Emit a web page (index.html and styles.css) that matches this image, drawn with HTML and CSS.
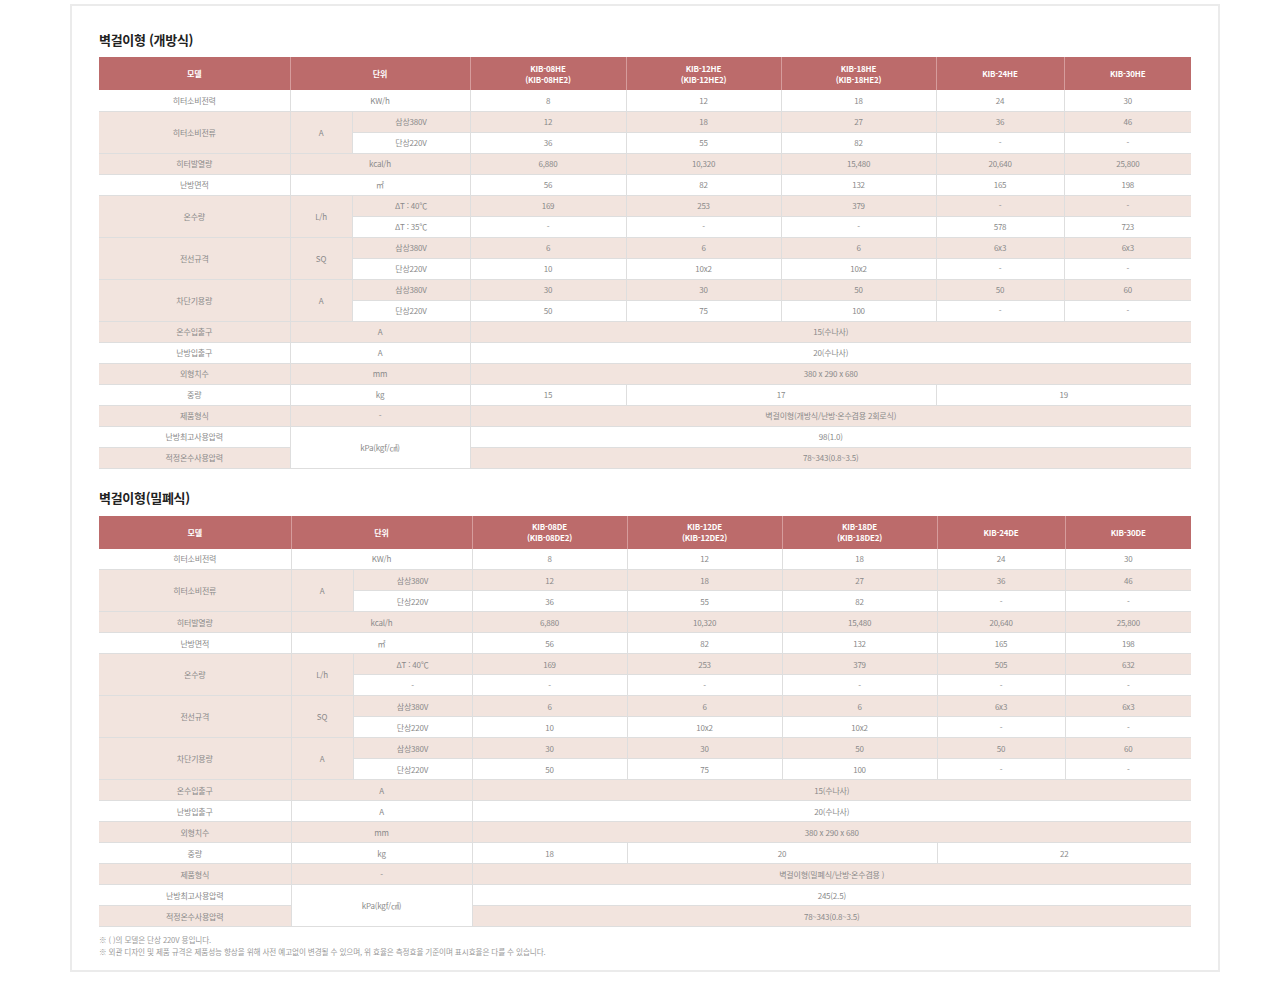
FILE: index.html
```html
<!DOCTYPE html>
<html lang="ko">
<head>
<meta charset="utf-8">
<title>벽걸이형 사양</title>
<link rel="stylesheet" href="styles.css">
</head>
<body>
<div class="box">
  <h2 class="title">벽걸이형 (개방식)</h2>
  <table class="spec">
    <colgroup>
      <col style="width:191px"><col style="width:62px"><col style="width:118px">
      <col style="width:156px"><col style="width:155px"><col style="width:155px">
      <col style="width:128px"><col style="width:127px">
    </colgroup>
    <thead>
      <tr><th>모델</th><th colspan="2">단위</th><th>KIB-08HE<br>(KIB-08HE2)</th><th>KIB-12HE<br>(KIB-12HE2)</th><th>KIB-18HE<br>(KIB-18HE2)</th><th>KIB-24HE</th><th>KIB-30HE</th></tr>
    </thead>
    <tbody>
      <tr><td>히터소비전력</td><td colspan="2">KW/h</td><td>8</td><td>12</td><td>18</td><td>24</td><td>30</td></tr>
      <tr class="p"><td rowspan="2">히터소비전류</td><td rowspan="2">A</td><td>삼상380V</td><td>12</td><td>18</td><td>27</td><td>36</td><td>46</td></tr>
      <tr><td>단상220V</td><td>36</td><td>55</td><td>82</td><td>-</td><td>-</td></tr>
      <tr class="p"><td>히터발열량</td><td colspan="2">kcal/h</td><td>6,880</td><td>10,320</td><td>15,480</td><td>20,640</td><td>25,800</td></tr>
      <tr><td>난방면적</td><td colspan="2">㎡</td><td>56</td><td>82</td><td>132</td><td>165</td><td>198</td></tr>
      <tr class="p"><td rowspan="2">온수량</td><td rowspan="2">L/h</td><td>ΔT : 40℃</td><td>169</td><td>253</td><td>379</td><td>-</td><td>-</td></tr>
      <tr><td>ΔT : 35℃</td><td>-</td><td>-</td><td>-</td><td>578</td><td>723</td></tr>
      <tr class="p"><td rowspan="2">전선규격</td><td rowspan="2">SQ</td><td>삼상380V</td><td>6</td><td>6</td><td>6</td><td>6x3</td><td>6x3</td></tr>
      <tr><td>단상220V</td><td>10</td><td>10x2</td><td>10x2</td><td>-</td><td>-</td></tr>
      <tr class="p"><td rowspan="2">차단기용량</td><td rowspan="2">A</td><td>삼상380V</td><td>30</td><td>30</td><td>50</td><td>50</td><td>60</td></tr>
      <tr><td>단상220V</td><td>50</td><td>75</td><td>100</td><td>-</td><td>-</td></tr>
      <tr class="p"><td>온수입출구</td><td colspan="2">A</td><td colspan="5">15(수나사)</td></tr>
      <tr><td>난방입출구</td><td colspan="2">A</td><td colspan="5">20(수나사)</td></tr>
      <tr class="p"><td>외형치수</td><td colspan="2">mm</td><td colspan="5">380 x 290 x 680</td></tr>
      <tr><td>중량</td><td colspan="2">kg</td><td>15</td><td colspan="2">17</td><td colspan="2">19</td></tr>
      <tr class="p"><td>제품형식</td><td colspan="2">-</td><td colspan="5">벽걸이형(개방식/난방·온수겸용 2회로식)</td></tr>
      <tr><td>난방최고사용압력</td><td colspan="2" rowspan="2">kPa(kgf/㎠)</td><td colspan="5">98(1.0)</td></tr>
      <tr class="p"><td>적정온수사용압력</td><td colspan="5">78~343(0.8~3.5)</td></tr>
    </tbody>
  </table>

  <h2 class="title title2">벽걸이형(밀폐식)</h2>
  <table class="spec">
    <colgroup>
      <col style="width:192px"><col style="width:62px"><col style="width:119px">
      <col style="width:155px"><col style="width:155px"><col style="width:155px">
      <col style="width:128px"><col style="width:126px">
    </colgroup>
    <thead>
      <tr><th>모델</th><th colspan="2">단위</th><th>KIB-08DE<br>(KIB-08DE2)</th><th>KIB-12DE<br>(KIB-12DE2)</th><th>KIB-18DE<br>(KIB-18DE2)</th><th>KIB-24DE</th><th>KIB-30DE</th></tr>
    </thead>
    <tbody>
      <tr><td>히터소비전력</td><td colspan="2">KW/h</td><td>8</td><td>12</td><td>18</td><td>24</td><td>30</td></tr>
      <tr class="p"><td rowspan="2">히터소비전류</td><td rowspan="2">A</td><td>삼상380V</td><td>12</td><td>18</td><td>27</td><td>36</td><td>46</td></tr>
      <tr><td>단상220V</td><td>36</td><td>55</td><td>82</td><td>-</td><td>-</td></tr>
      <tr class="p"><td>히터발열량</td><td colspan="2">kcal/h</td><td>6,880</td><td>10,320</td><td>15,480</td><td>20,640</td><td>25,800</td></tr>
      <tr><td>난방면적</td><td colspan="2">㎡</td><td>56</td><td>82</td><td>132</td><td>165</td><td>198</td></tr>
      <tr class="p"><td rowspan="2">온수량</td><td rowspan="2">L/h</td><td>ΔT : 40℃</td><td>169</td><td>253</td><td>379</td><td>505</td><td>632</td></tr>
      <tr><td>-</td><td>-</td><td>-</td><td>-</td><td>-</td><td>-</td></tr>
      <tr class="p"><td rowspan="2">전선규격</td><td rowspan="2">SQ</td><td>삼상380V</td><td>6</td><td>6</td><td>6</td><td>6x3</td><td>6x3</td></tr>
      <tr><td>단상220V</td><td>10</td><td>10x2</td><td>10x2</td><td>-</td><td>-</td></tr>
      <tr class="p"><td rowspan="2">차단기용량</td><td rowspan="2">A</td><td>삼상380V</td><td>30</td><td>30</td><td>50</td><td>50</td><td>60</td></tr>
      <tr><td>단상220V</td><td>50</td><td>75</td><td>100</td><td>-</td><td>-</td></tr>
      <tr class="p"><td>온수입출구</td><td colspan="2">A</td><td colspan="5">15(수나사)</td></tr>
      <tr><td>난방입출구</td><td colspan="2">A</td><td colspan="5">20(수나사)</td></tr>
      <tr class="p"><td>외형치수</td><td colspan="2">mm</td><td colspan="5">380 x 290 x 680</td></tr>
      <tr><td>중량</td><td colspan="2">kg</td><td>18</td><td colspan="2">20</td><td colspan="2">22</td></tr>
      <tr class="p"><td>제품형식</td><td colspan="2">-</td><td colspan="5">벽걸이형(밀폐식/난방·온수겸용 )</td></tr>
      <tr><td>난방최고사용압력</td><td colspan="2" rowspan="2">kPa(kgf/㎠)</td><td colspan="5">245(2.5)</td></tr>
      <tr class="p"><td>적정온수사용압력</td><td colspan="5">78~343(0.8~3.5)</td></tr>
    </tbody>
  </table>

  <div class="notes">
    <p>※ ( )의 모델은 단상 220V 용입니다.</p>
    <p>※ 외관 디자인 및 제품 규격은 제품성능 향상을 위해 사전 예고없이 변경될 수 있으며, 위 효율은 측정효율 기준이며 표시효율은 다를 수 있습니다.</p>
  </div>
</div>
</body>
</html>
```

FILE: styles.css
```css
html, body {
  margin: 0;
  padding: 0;
  background: #ffffff;
}

body {
  font-family: "Noto Sans CJK KR", "Noto Sans", sans-serif;
  color: #888;
}

.box {
  box-sizing: border-box;
  width: 1150px;
  height: 968px;
  margin: 4px 0 0 70px;
  border: 2px solid #ebebeb;
  padding: 24px 27px 0 27px;
}

.title {
  margin: 0 0 7px 0;
  font-size: 13px;
  line-height: 20px;
  height: 20px;
  font-weight: 700;
  color: #222;
  letter-spacing: -0.3px;
}

.title2 {
  margin-top: 19px;
  margin-bottom: 8px;
}

.spec {
  width: 1092px;
  table-layout: fixed;
  border-collapse: collapse;
  font-size: 8px;
  line-height: 11px;
  text-align: center;
  letter-spacing: -0.2px;
}

.spec th {
  height: 33px;
  padding: 0;
  background: #bc6b6b;
  color: #fff;
  font-weight: 700;
  border-left: 1px solid #d69c9c;
  border-right: 1px solid #d69c9c;
  vertical-align: middle;
}

.spec th:first-child { border-left: none; }
.spec th:last-child { border-right: none; }

.spec tbody tr {
  height: 21px;
}

.spec td {
  padding: 0;
  background: #fff;
  color: #8a8a8a;
  border: 1px solid #dedede;
  vertical-align: middle;
  white-space: nowrap;
}

.spec tbody tr.p td {
  background: #f2e4de;
}

.spec tbody tr td:first-child {
  border-left: none;
}

.spec tbody tr td:last-child {
  border-right: none;
}

.spec tbody tr:first-child td {
  border-top: none;
}

.notes {
  margin-top: 7px;
  font-size: 7.6px;
  line-height: 12px;
  color: #9a9a9a;
  letter-spacing: -0.1px;
}

.notes p {
  margin: 0;
}
```
